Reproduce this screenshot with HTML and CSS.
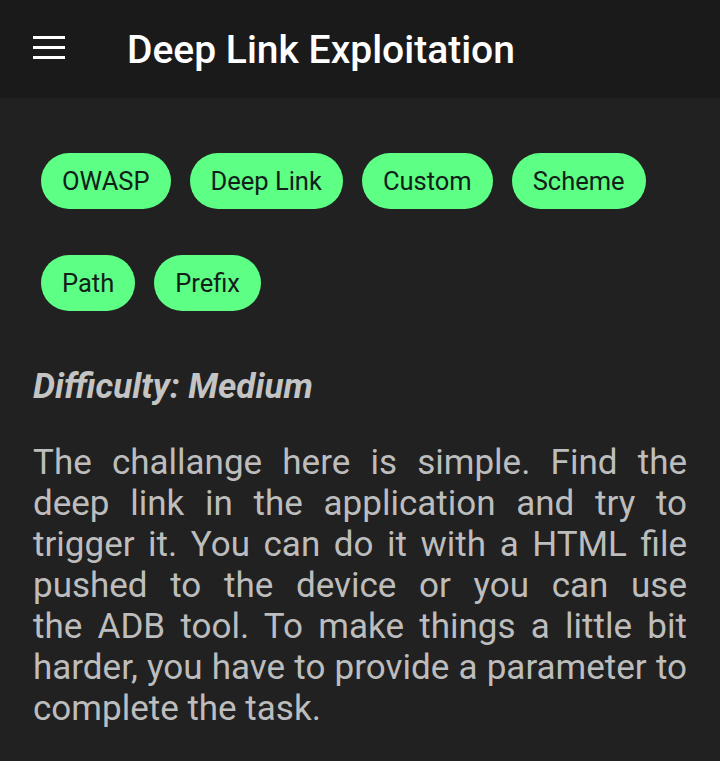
FILE: index.html
```html
<!DOCTYPE html>
<html>
<head>
<meta charset="utf-8">
<link rel="stylesheet" href="styles.css">
</head>
<body>
<header class="appbar">
  <svg class="menu" width="32" height="24" viewBox="0 0 32 24">
    <rect x="0" y="1" width="32" height="3" fill="#fff"/>
    <rect x="0" y="11" width="32" height="3" fill="#fff"/>
    <rect x="0" y="21" width="32" height="3" fill="#fff"/>
  </svg>
  <h1 class="title">Deep Link Exploitation</h1>
</header>
<main class="content">
  <div class="chips">
    <span class="chip">OWASP</span>
    <span class="chip">Deep Link</span>
    <span class="chip">Custom</span>
    <span class="chip">Scheme</span>
    <span class="chip">Path</span>
    <span class="chip">Prefix</span>
  </div>
  <p class="difficulty">Difficulty: Medium</p>
  <p class="desc">The challange here is simple. Find the deep link in the application and try to trigger it. You can do it with a HTML file pushed to the device or you can use the&nbsp;ADB tool. To make things a little bit harder, you have to provide a parameter to complete the task.</p>
</main>
</body>
</html>
```
FILE: styles.css
```css
html, body {
  margin: 0;
  padding: 0;
  background: #212121;
  font-family: Roboto, "Noto Sans", sans-serif;
}
.appbar {
  height: 98px;
  background: #1a1a1a;
  display: flex;
  align-items: center;
  padding-left: 33px;
  box-sizing: border-box;
}
.menu {
  display: block;
  margin-top: -4px;
}
.title {
  margin: 2px 0 0 62px;
  color: #fff;
  font-size: 39px;
  font-weight: 500;
}
.content {
  padding: 55px 33px 20px 33px;
}
.chips {
  display: flex;
  flex-wrap: wrap;
  column-gap: 19px;
  row-gap: 46px;
  padding-left: 8px;
}
.chip {
  height: 56px;
  display: flex;
  align-items: center;
  padding: 0 21px;
  border-radius: 28px;
  background: #5dff84;
  color: #13201a;
  font-size: 25.5px;
}
.difficulty {
  margin: 54px 0 0 0;
  color: #c4c4c4;
  font-size: 35px;
  line-height: 44px;
  font-weight: 700;
  font-style: italic;
}
.desc {
  margin: 33px 0 0 0;
  color: #bdbdbd;
  font-size: 35px;
  line-height: 41px;
  text-align: justify;
}
```
